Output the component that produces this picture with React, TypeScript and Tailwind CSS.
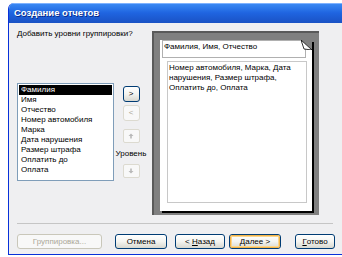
import React from "react"

const fields = [
  "Фамилия",
  "Имя",
  "Отчество",
  "Номер автомобиля",
  "Марка",
  "Дата нарушения",
  "Размер штрафа",
  "Оплатить до",
  "Оплата",
]

const font = { fontFamily: '"Liberation Sans", Arial, sans-serif' }

function XpButton({
  children,
  disabled,
  focused,
  className = "",
}: {
  children: React.ReactNode
  disabled?: boolean
  focused?: boolean
  className?: string
}) {
  if (disabled) {
    return (
      <div
        className={`flex items-center justify-center rounded-[3px] border border-[#c9c7ba] bg-[#f5f4ea] text-[8px] text-[#aca899] ${className}`}
      >
        {children}
      </div>
    )
  }
  return (
    <div
      className={`flex items-center justify-center rounded-[3px] border border-[#003c74] bg-gradient-to-b from-white via-[#f4f4f0] to-[#d8d8d0] text-[8px] text-black ${className}`}
    >
      <div
        className={`flex h-full w-full items-center justify-center rounded-[2px] ${
          focused ? "border border-[#f5b54a] shadow-[inset_0_0_0_1px_#fbd78f]" : ""
        }`}
      >
        {children}
      </div>
    </div>
  )
}

function ArrowIcon({ up }: { up?: boolean }) {
  return (
    <svg width="6" height="6" viewBox="0 0 6 6">
      {up ? (
        <path d="M3 0.5 L5.5 3 L3.8 3 L3.8 5.5 L2.2 5.5 L2.2 3 L0.5 3 Z" fill="#b8b8b8" />
      ) : (
        <path d="M3 5.5 L5.5 3 L3.8 3 L3.8 0.5 L2.2 0.5 L2.2 3 L0.5 3 Z" fill="#b8b8b8" />
      )}
    </svg>
  )
}

export default function App() {
  return (
    <div className="h-[257px] w-[342px] overflow-hidden bg-white" style={font}>
      <div className="ml-[8px] mt-[3px] h-[252px] w-[340px] overflow-hidden rounded-tl-[6px] border-b border-l border-[#0831d9]">
        {/* Title bar */}
        <div className="flex h-[20px] items-center bg-gradient-to-b from-[#3d8cf5] via-[#1f64e0] to-[#1a52c4] pl-[5px] shadow-[inset_0_1px_0_#7fb2ff]">
          <span className="text-[9.5px] font-bold text-white [text-shadow:1px_1px_0_#0a2a8a]">
            Создание отчетов
          </span>
        </div>

        {/* Body */}
        <div className="h-[232px] bg-[#efeff1] pl-[8px] pr-[8px]">
          <div className="flex h-[192px]">
            {/* Left side */}
            <div className="flex w-[135px] flex-col">
              <div className="mt-[5px] h-[12px] text-[8px] leading-[12px] text-black">
                Добавить уровни группировки?
              </div>
              <div className="mt-[43px] flex">
                <div className="h-[98px] w-[97px] border border-[#7f9db9] bg-white p-[1px]">
                  {fields.map((f, i) => (
                    <div
                      key={f}
                      className={`h-[10px] pl-[2px] text-[8px] leading-[10px] ${
                        i === 0 ? "bg-black text-white" : "text-black"
                      }`}
                    >
                      {f}
                    </div>
                  ))}
                </div>
                <div className="flex w-[34px] flex-col items-center pt-[3px]">
                  <XpButton className="h-[16px] w-[17px]">&gt;</XpButton>
                  <XpButton disabled className="mt-[3px] h-[16px] w-[17px] border-[#dcdad0] bg-[#f8f8f8]">
                    &lt;
                  </XpButton>
                  <div className="mt-[8px] flex h-[14px] w-[17px] items-center justify-center rounded-[2px] border border-[#dcdad0] bg-[#f8f8f8]">
                    <ArrowIcon up />
                  </div>
                  <div className="mt-[5px] h-[12px] text-[8px] leading-[12px] text-black">Уровень</div>
                  <div className="mt-[4px] flex h-[14px] w-[17px] items-center justify-center rounded-[2px] border border-[#dcdad0] bg-[#f8f8f8]">
                    <ArrowIcon />
                  </div>
                </div>
              </div>
            </div>

            {/* Preview */}
            <div className="ml-[0px] mt-[8px] h-[184px] w-[167px] border-l-2 border-t-2 border-[#5a5a5a] bg-[#808080] pl-[6px] pt-[6px]">
              <div className="relative h-[171px] w-[152px] bg-white shadow-[2px_2px_0_#000]">
                <div className="ml-[2px] mt-[1px] h-[18px] w-[144px] border border-[#b0b0b0] pl-[1px] text-[8px] leading-[12px] text-black">
                  Фамилия, Имя, Отчество
                </div>
                <div className="ml-[7px] mt-[3px] h-[142px] w-[140px] border border-[#c8c8c8] pl-[1px] pt-[1px] text-[8px] leading-[10px] text-black">
                  Номер автомобиля, Марка, Дата
                  <br />
                  нарушения, Размер штрафа,
                  <br />
                  Оплатить до, Оплата
                </div>
                <svg className="absolute right-0 top-0" width="11" height="10" viewBox="0 0 11 10">
                  <path d="M0 0 L11 0 L11 10 Z" fill="#808080" />
                  <path d="M0 0 L3 9 L11 10 Z" fill="#ffffff" stroke="#000" strokeWidth="0.8" />
                </svg>
              </div>
            </div>
          </div>

          {/* Separator */}
          <div className="mt-[8px] h-[2px] w-[316px] border-t border-[#c5c5c5] border-b-white" />

          {/* Buttons */}
          <div className="mt-[9px] flex h-[15px]">
            <XpButton disabled className="h-[15px] w-[85px] bg-[#f8f8f8]">
              Группировка...
            </XpButton>
            <XpButton className="ml-[13px] h-[15px] w-[52px]">Отмена</XpButton>
            <XpButton className="ml-[8px] h-[15px] w-[50px]">
              &lt;&nbsp;<span className="underline">Н</span>азад
            </XpButton>
            <XpButton focused className="ml-[4px] h-[15px] w-[52px]">
              <span className="underline">Д</span>алее &gt;
            </XpButton>
            <XpButton className="ml-[14px] h-[15px] w-[40px]">
              <span className="underline">Г</span>отово
            </XpButton>
          </div>
        </div>
      </div>
    </div>
  )
}
